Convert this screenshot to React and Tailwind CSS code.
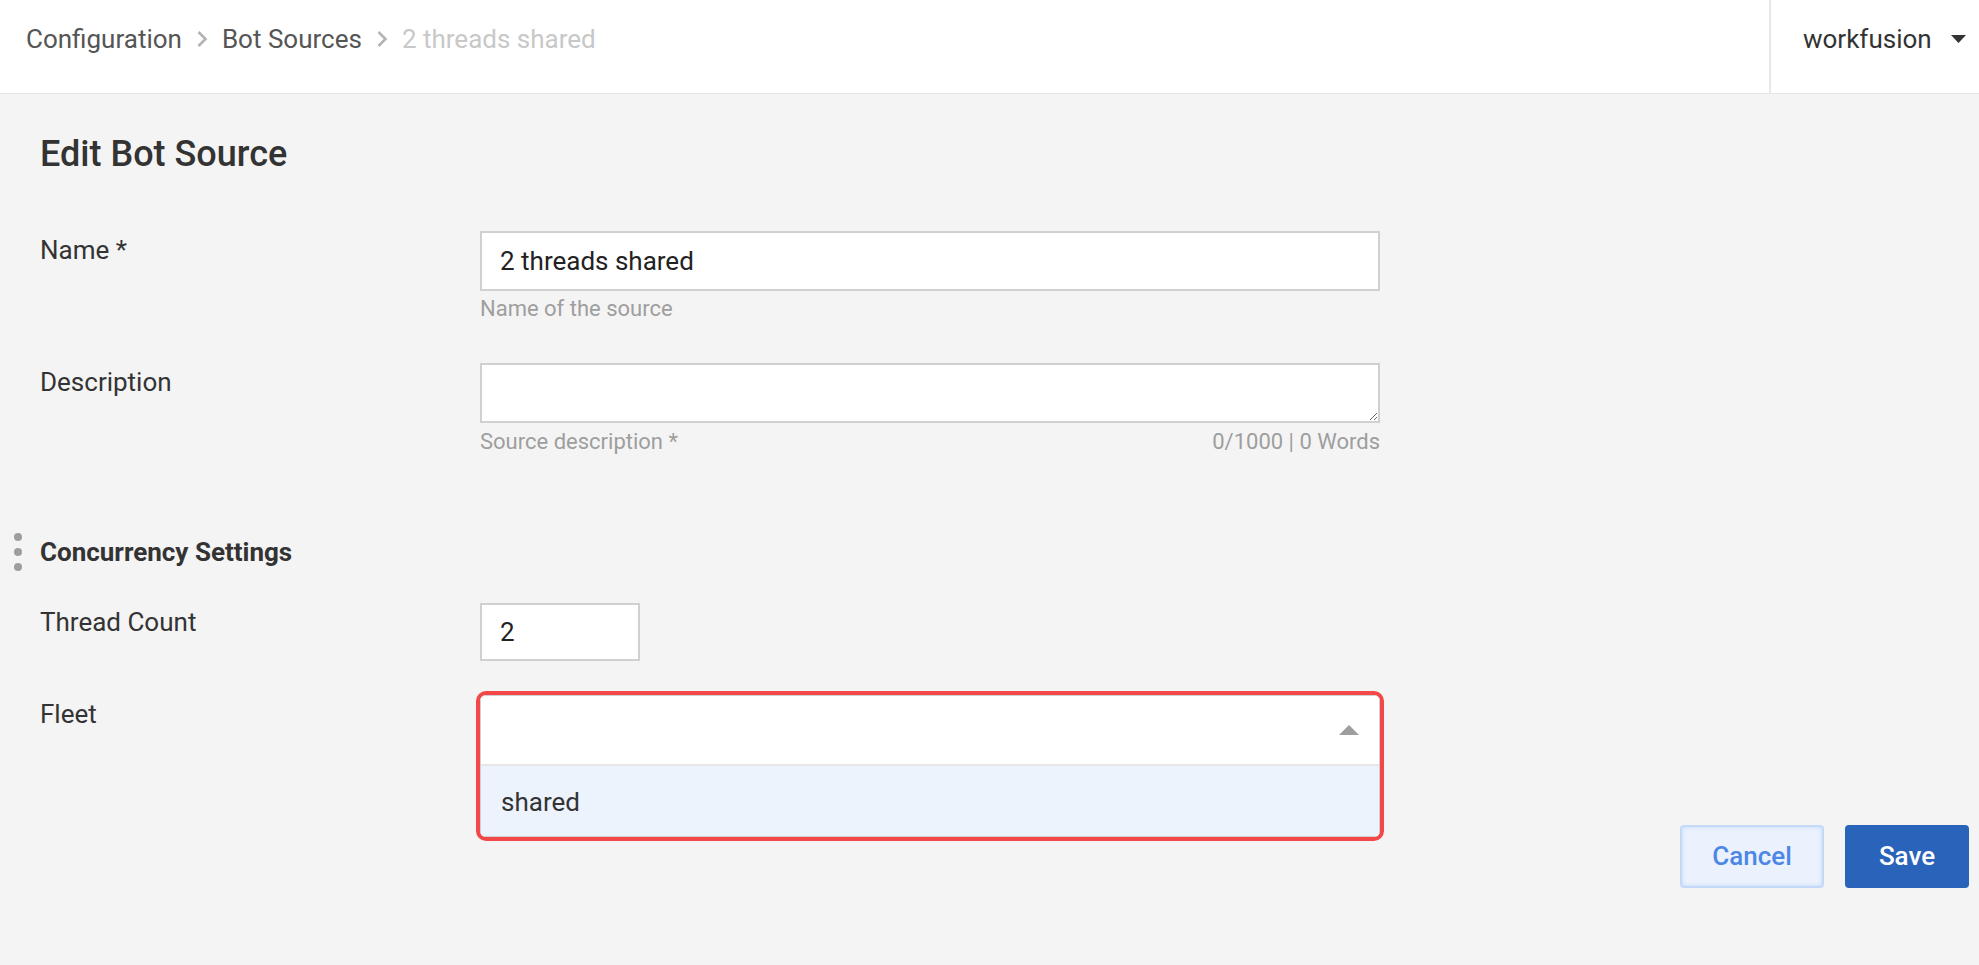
import { useState } from "react";

function Chevron() {
  return (
    <svg width="12" height="18" viewBox="0 0 12 18" className="mx-[14px]">
      <path d="M2.5 2l7 7-7 7" fill="none" stroke="#b4b4b4" strokeWidth="2.6" />
    </svg>
  );
}

function DragDots() {
  return (
    <div className="flex flex-col gap-[7px]">
      <span className="block h-[8px] w-[8px] rounded-full bg-[#9e9e9e]" />
      <span className="block h-[8px] w-[8px] rounded-full bg-[#9e9e9e]" />
      <span className="block h-[8px] w-[8px] rounded-full bg-[#9e9e9e]" />
    </div>
  );
}

function Label({ children }) {
  return (
    <div className="w-[440px] shrink-0 pt-[4px] text-[26px] leading-[30px] text-[#333]">
      {children}
    </div>
  );
}

export default function App() {
  const [name, setName] = useState("2 threads shared");
  const [description, setDescription] = useState("");
  const [threads, setThreads] = useState("2");

  return (
    <div className="min-h-screen bg-[#f4f4f4] font-['Roboto',sans-serif] text-[#333]">
      {/* Top bar */}
      <header className="flex h-[94px] items-stretch border-b border-[#e6e6e6] bg-white">
        <nav className="flex flex-1 items-center pl-[26px] pb-[15px] text-[26px]">
          <span className="text-[#555]">Configuration</span>
          <Chevron />
          <span className="text-[#555]">Bot Sources</span>
          <Chevron />
          <span className="text-[#c8c8c8]">2 threads shared</span>
        </nav>
        <div className="flex w-[210px] items-center border-l-2 border-[#e8e8e8] pl-[32px] pb-[15px]">
          <span className="text-[26px] text-[#333]">workfusion</span>
          <svg width="15" height="8" viewBox="0 0 15 8" className="ml-[19px]">
            <path d="M0 0h15L7.5 8z" fill="#333" />
          </svg>
        </div>
      </header>

      <main className="pl-[40px] pt-[40px]">
        <h1 className="text-[36px] font-medium leading-[41px] text-[#333]">Edit Bot Source</h1>

        {/* Name */}
        <div className="mt-[56px] flex">
          <Label>Name *</Label>
          <div className="w-[900px]">
            <input
              value={name}
              onChange={(e) => setName(e.target.value)}
              className="h-[60px] w-full border-2 border-[#d0d0d0] bg-white px-[18px] text-[26px] text-[#222] outline-none"
            />
            <div className="mt-[5px] text-[22px] leading-[26px] text-[#9e9e9e]">Name of the source</div>
          </div>
        </div>

        {/* Description */}
        <div className="mt-[41px] flex">
          <Label>Description</Label>
          <div className="w-[900px]">
            <textarea
              value={description}
              onChange={(e) => setDescription(e.target.value)}
              className="block h-[60px] w-full resize-y border-2 border-[#d0d0d0] bg-white px-[18px] py-[10px] text-[26px] outline-none"
            />
            <div className="mt-[6px] flex justify-between text-[22px] leading-[26px] text-[#9e9e9e]">
              <span>Source description *</span>
              <span>0/1000 | 0 Words</span>
            </div>
          </div>
        </div>

        {/* Concurrency */}
        <div className="-ml-[26px] mt-[78px] flex items-center gap-[18px]">
          <DragDots />
          <h2 className="text-[26px] font-bold leading-[30px] text-[#333]">Concurrency Settings</h2>
        </div>

        <div className="mt-[32px] flex">
          <Label>Thread Count</Label>
          <input
            value={threads}
            onChange={(e) => setThreads(e.target.value)}
            className="h-[58px] w-[160px] border-2 border-[#d0d0d0] bg-white px-[18px] text-[26px] text-[#222] outline-none"
          />
        </div>

        <div className="mt-[34px] flex">
          <Label>Fleet</Label>
          <div className="relative h-[70px] w-[900px]">
            {/* open dropdown */}
            <div className="absolute -left-[4px] -right-[4px] -top-[4px] overflow-hidden rounded-[10px] border-[4px] border-[#f44848] bg-white">
              <div className="border border-[#cfcfcf]">
                <div className="flex h-[68px] items-center justify-end pr-[20px]">
                  <svg width="20" height="10" viewBox="0 0 20 10">
                    <path d="M0 10h20L10 0z" fill="#9e9e9e" />
                  </svg>
                </div>
                <div className="flex h-[72px] items-center border-t-2 border-[#e6e6e6] bg-[#ecf3fd] px-[20px] pt-[3px] text-[26px] text-[#333]">
                  shared
                </div>
              </div>
            </div>
          </div>
        </div>

        {/* Actions */}
        <div className="mt-[60px] flex justify-end gap-[21px] pr-[10px]">
          <button className="h-[63px] w-[144px] rounded-[4px] border-2 border-[#c4d8f7] bg-[#ebf2fd] text-[26px] font-medium text-[#4c87e6] shadow-[inset_0_0_4px_rgba(120,160,230,0.35)]">
            Cancel
          </button>
          <button className="h-[63px] w-[124px] rounded-[4px] bg-[#2a63ba] text-[26px] font-medium text-white">
            Save
          </button>
        </div>
      </main>
    </div>
  );
}
